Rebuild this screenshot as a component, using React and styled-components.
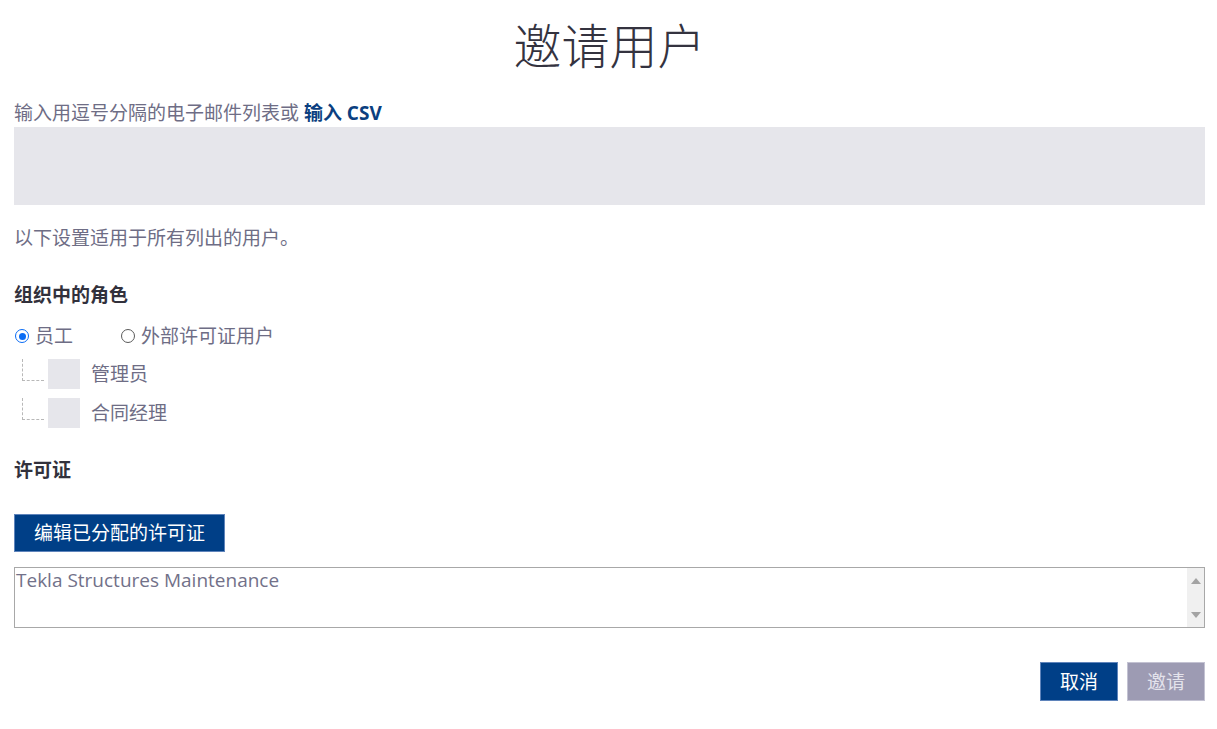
import React from "react";
import styled, { createGlobalStyle } from "styled-components";

const Global = createGlobalStyle`
  html, body { margin: 0; padding: 0; background: #fff; }
  body { font-family: "Open Sans", "Noto Sans CJK SC", sans-serif; }
  * { box-sizing: border-box; }
`;

const Page = styled.div`
  padding: 0 12px 0 14px;
  display: flex;
  flex-direction: column;
  font-size: 19px;
  line-height: 26px;
  color: #6e6d85;
`;

const Title = styled.h1`
  margin: 18px 0 0;
  font-size: 48px;
  line-height: 56px;
  font-weight: 300;
  text-align: center;
  color: #34333f;
`;

const Text = styled.div`
  margin-top: ${(p) => p.$mt}px;
`;

const Link = styled.a`
  color: #0b3f80;
  font-weight: 700;
  text-decoration: none;
`;

const EmailBox = styled.div`
  margin-top: 1px;
  height: 78px;
  background: #e6e6eb;
`;

const Heading = styled.div`
  margin-top: ${(p) => p.$mt}px;
  font-weight: 700;
  color: #32313c;
`;

const RadioRow = styled.div`
  margin-top: 15px;
  display: flex;
  align-items: center;
`;

const RadioItem = styled.label`
  display: flex;
  align-items: center;
  gap: 6px;
  margin-right: 47px;
  padding-left: 1px;
`;

const RadioDot = styled.span`
  width: 14px;
  height: 14px;
  border-radius: 50%;
  border: ${(p) => (p.$checked ? "1.5px solid #0a6cf5" : "1.5px solid #5a5a5a")};
  display: flex;
  align-items: center;
  justify-content: center;
  &::after {
    content: "";
    width: 7px;
    height: 7px;
    border-radius: 50%;
    background: ${(p) => (p.$checked ? "#0a6cf5" : "transparent")};
  }
`;

const TreeRow = styled.div`
  margin-top: ${(p) => p.$mt}px;
  display: flex;
  align-items: center;
  height: 30px;
`;

const Connector = styled.span`
  width: 34px;
  height: 30px;
  display: flex;
  padding-left: 8px;
  &::before {
    content: "";
    width: 21px;
    height: 21px;
    border-left: 1px dashed #b8b8b8;
    border-bottom: 1px dashed #b8b8b8;
  }
`;

const Check = styled.span`
  width: 32px;
  height: 30px;
  background: #e6e6eb;
  margin-right: 11px;
`;

const PrimaryButton = styled.button`
  font-family: inherit;
  font-size: 19px;
  line-height: 26px;
  color: ${(p) => (p.$disabled ? "#e4e3ec" : "#fff")};
  background: ${(p) => (p.$disabled ? "#9d9bb3" : "#003f87")};
  border: 1px solid ${(p) => (p.$disabled ? "#c3c2d2" : "#5f84bb")};
  padding: ${(p) => p.$pad};
  height: ${(p) => p.$h}px;
  cursor: pointer;
`;

const EditWrap = styled.div`
  margin-top: 31px;
  display: flex;
`;

const ListBox = styled.div`
  margin-top: 15px;
  height: 61px;
  border: 1px solid #a8a8a8;
  display: flex;
`;

const ListItems = styled.div`
  flex: 1;
  padding: 0 1px;
  line-height: 24px;
  color: #727189;
`;

const Scrollbar = styled.div`
  width: 17px;
  background: #f0f0f0;
  display: flex;
  flex-direction: column;
  justify-content: space-between;
  align-items: center;
  padding: 10px 0 9px;
`;

const Arrow = styled.span`
  width: 0;
  height: 0;
  border-left: 5px solid transparent;
  border-right: 5px solid transparent;
  ${(p) =>
    p.$up
      ? "border-bottom: 6px solid #a3a3a3;"
      : "border-top: 6px solid #a3a3a3;"}
`;

const Footer = styled.div`
  margin-top: 34px;
  display: flex;
  justify-content: flex-end;
  gap: 9px;
`;

export default function App() {
  return (
    <>
      <Global />
      <Page>
        <Title>邀请用户</Title>
        <Text $mt={26}>
          输入用逗号分隔的电子邮件列表或 <Link>输入 CSV</Link>
        </Text>
        <EmailBox />
        <Text $mt={20}>以下设置适用于所有列出的用户。</Text>
        <Heading $mt={31}>组织中的角色</Heading>
        <RadioRow>
          <RadioItem>
            <RadioDot $checked />
            员工
          </RadioItem>
          <RadioItem>
            <RadioDot />
            外部许可证用户
          </RadioItem>
        </RadioRow>
        <TreeRow $mt={10}>
          <Connector />
          <Check />
          管理员
        </TreeRow>
        <TreeRow $mt={9}>
          <Connector />
          <Check />
          合同经理
        </TreeRow>
        <Heading $mt={29}>许可证</Heading>
        <EditWrap>
          <PrimaryButton $pad="0 19px" $h={38}>编辑已分配的许可证</PrimaryButton>
        </EditWrap>
        <ListBox>
          <ListItems>Tekla Structures Maintenance</ListItems>
          <Scrollbar>
            <Arrow $up />
            <Arrow />
          </Scrollbar>
        </ListBox>
        <Footer>
          <PrimaryButton $pad="0 19px" $h={39}>取消</PrimaryButton>
          <PrimaryButton $pad="0 19px" $h={39} $disabled>邀请</PrimaryButton>
        </Footer>
      </Page>
    </>
  );
}
